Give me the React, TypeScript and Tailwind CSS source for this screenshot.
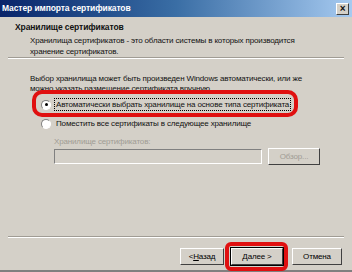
import React from 'react'

const Radio: React.FC<{ checked?: boolean }> = ({ checked }) => (
  <span className="relative inline-block h-[10px] w-[10px] shrink-0 rounded-full border border-t-[#808080] border-l-[#808080] border-r-white border-b-white bg-white">
    {checked && <span className="absolute left-[2.5px] top-[2.5px] h-[3px] w-[3px] rounded-full bg-black" />}
  </span>
)

const Btn: React.FC<{ children: React.ReactNode; def?: boolean; disabled?: boolean }> = ({ children, def, disabled }) => (
  <div
    className={
      'flex h-[17px] items-center justify-center border border-t-white border-l-white border-r-[#404040] border-b-[#404040] bg-[#d4d0c8] ' +
      (def ? 'outline outline-1 outline-black ' : '') +
      (disabled ? 'text-[#a09c94]' : 'text-black')
    }
  >
    {children}
  </div>
)

export default function App() {
  return (
    <div
      className="relative flex h-[272px] w-[352px] flex-col overflow-hidden whitespace-nowrap bg-[#d4d0c8] text-[8px] leading-[11px] tracking-[-0.15px] text-[#111]"
      style={{ fontFamily: '"Liberation Sans", Arial, sans-serif' }}
    >
      {/* title bar */}
      <div className="flex h-[17px] shrink-0 items-center justify-between bg-gradient-to-r from-[#0a246a] via-[#3a6ea5] to-[#a6caf0] pl-[2px] pr-[3px]">
        <span className="text-[8.5px] font-bold tracking-[-0.1px] text-white">Мастер импорта сертификатов</span>
        <span className="flex h-[12px] w-[13px] items-center justify-center border border-t-white border-l-white border-r-[#404040] border-b-[#404040] bg-[#d4d0c8] text-[10px] font-bold leading-none">
          ×
        </span>
      </div>

      {/* header */}
      <div className="flex flex-col pl-[15px] pt-[5px]">
        <div className="text-[8.5px] font-bold tracking-[-0.1px]">Хранилище сертификатов</div>
        <div className="mt-[2px] pl-[15px]">
          Хранилища сертификатов - это области системы в которых производится
          <br />
          хранение сертификатов.
        </div>
      </div>
      <div className="mx-[8px] border-t border-b border-t-[#a09c94] border-b-white" />

      {/* body */}
      <div className="flex flex-col pl-[30px] pt-[15px] leading-[10px]">
        <div>
          Выбор хранилища может быть произведен Windows автоматически, или же
          <br />
          можно указать размещение сертификата вручную.
        </div>
        <div className="mt-[4px] flex items-center gap-[3px] pl-[11px] leading-[11px]">
          <Radio checked />
          <span className="border border-dotted border-black px-[1px]">
            Автоматически выбрать хранилище на основе типа сертификата
          </span>
        </div>
        <div className="mt-[6px] flex items-center gap-[3px] pl-[11px] leading-[11px]">
          <Radio />
          <span className="border border-transparent px-[1px]">Поместить все сертификаты в следующее хранилище</span>
        </div>
        <div className="mt-[6px] pl-[24px] leading-[11px] text-[#a09c94]">Хранилище сертификатов:</div>
        <div className="mt-[1px] flex items-center gap-[6px] pl-[24px]">
          <div className="h-[15px] w-[208px] border border-t-[#808080] border-l-[#808080] border-r-white border-b-white bg-[#d4d0c8]" />
          <div className="w-[52px]">
            <Btn disabled>Обзор...</Btn>
          </div>
        </div>
      </div>

      <div className="flex-1" />

      <div className="mx-[8px] border-t border-b border-t-[#a09c94] border-b-white" />

      {/* buttons */}
      <div className="flex items-center justify-end gap-[7px] pr-[10px] pt-[10px] pb-[5px]">
        <div className="w-[44px]">
          <Btn>
            &lt; <span className="underline">Н</span>азад
          </Btn>
        </div>
        <div className="w-[52px]">
          <Btn def>
            <span className="underline">Д</span>алее &gt;
          </Btn>
        </div>
        <div className="ml-[2px] w-[50px]">
          <Btn>Отмена</Btn>
        </div>
      </div>
      <div className="h-[2px] shrink-0 bg-[#808080]" />

      {/* red annotations */}
      <div className="pointer-events-none absolute left-[32px] top-[90px] h-[27px] w-[266px] rounded-[10px] border-[4px] border-[#e01010]" />
      <div className="pointer-events-none absolute left-[225px] top-[242px] h-[29px] w-[63px] rounded-[6px] border-[4px] border-[#e01010]" />
    </div>
  )
}
